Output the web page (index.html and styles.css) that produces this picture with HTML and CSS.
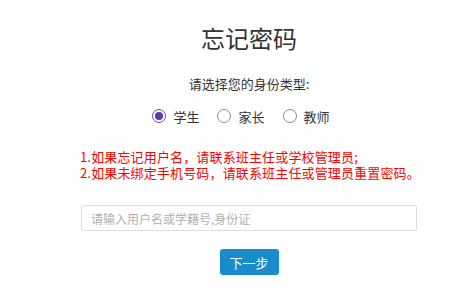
FILE: index.html
```html
<!DOCTYPE html>
<html lang="zh-CN">
<head>
<meta charset="utf-8">
<title>忘记密码</title>
<link rel="stylesheet" href="styles.css">
</head>
<body>
<div class="page">
  <h1 class="title">忘记密码</h1>
  <p class="subtitle">请选择您的身份类型:</p>
  <div class="roles">
    <label class="role"><span class="radio checked"></span><span class="role-text">学生</span></label>
    <label class="role"><span class="radio"></span><span class="role-text">家长</span></label>
    <label class="role"><span class="radio"></span><span class="role-text">教师</span></label>
  </div>
  <div class="notice">
    <p>1.如果忘记用户名，请联系班主任或学校管理员;</p>
    <p>2.如果未绑定手机号码，请联系班主任或管理员重置密码。</p>
  </div>
  <input class="account" type="text" placeholder="请输入用户名或学籍号,身份证">
  <div class="actions"><button class="next" type="button">下一步</button></div>
</div>
</body>
</html>
```
FILE: styles.css
```css
html, body {
  margin: 0;
  padding: 0;
  background: #fff;
}
body {
  font-family: "Noto Sans CJK SC", "Noto Sans", sans-serif;
  color: #333;
}
.page {
  width: 336px;
  margin-left: 81px;
  display: flex;
  flex-direction: column;
}
.title {
  margin: 22px 0 0;
  height: 32px;
  line-height: 32px;
  font-size: 24px;
  font-weight: normal;
  text-align: center;
  color: #333;
}
.subtitle {
  margin: 20px 0 0;
  height: 20px;
  line-height: 20px;
  font-size: 13px;
  text-align: center;
  color: #333;
}
.roles {
  margin-top: 12px;
  height: 20px;
  display: flex;
  justify-content: center;
  align-items: center;
  gap: 18px;
  padding-right: 16px;
}
.role {
  display: flex;
  align-items: center;
  gap: 7px;
  font-size: 13px;
  color: #333;
}
.radio {
  box-sizing: border-box;
  width: 14px;
  height: 14px;
  border: 1px solid #8a8a8a;
  border-radius: 50%;
  display: flex;
  align-items: center;
  justify-content: center;
  background: #fff;
}
.radio.checked {
  border-color: #6b4bb3;
}
.radio.checked::after {
  content: "";
  width: 8px;
  height: 8px;
  border-radius: 50%;
  background: #5e35b1;
}
.notice {
  margin-top: 23px;
  color: #f00;
  font-size: 13px;
  line-height: 16px;
  margin-left: -1px;
  letter-spacing: 0.15px;
}
.notice p {
  margin: 0;
  white-space: nowrap;
}
.account {
  box-sizing: border-box;
  margin-top: 24px;
  width: 336px;
  height: 26px;
  border: 1px solid #dcdcdc;
  border-radius: 2px;
  padding: 0 9px;
  font-family: inherit;
  font-size: 12px;
  color: #333;
  outline: none;
}
.account::placeholder {
  color: #b0b0b0;
}
.actions {
  margin-top: 18px;
  display: flex;
  justify-content: center;
}
.next {
  width: 59px;
  height: 26px;
  border: none;
  border-radius: 3px;
  background: #1a8ccb;
  color: #fff;
  font-family: inherit;
  font-size: 13px;
  padding: 0;
  cursor: pointer;
}
```
